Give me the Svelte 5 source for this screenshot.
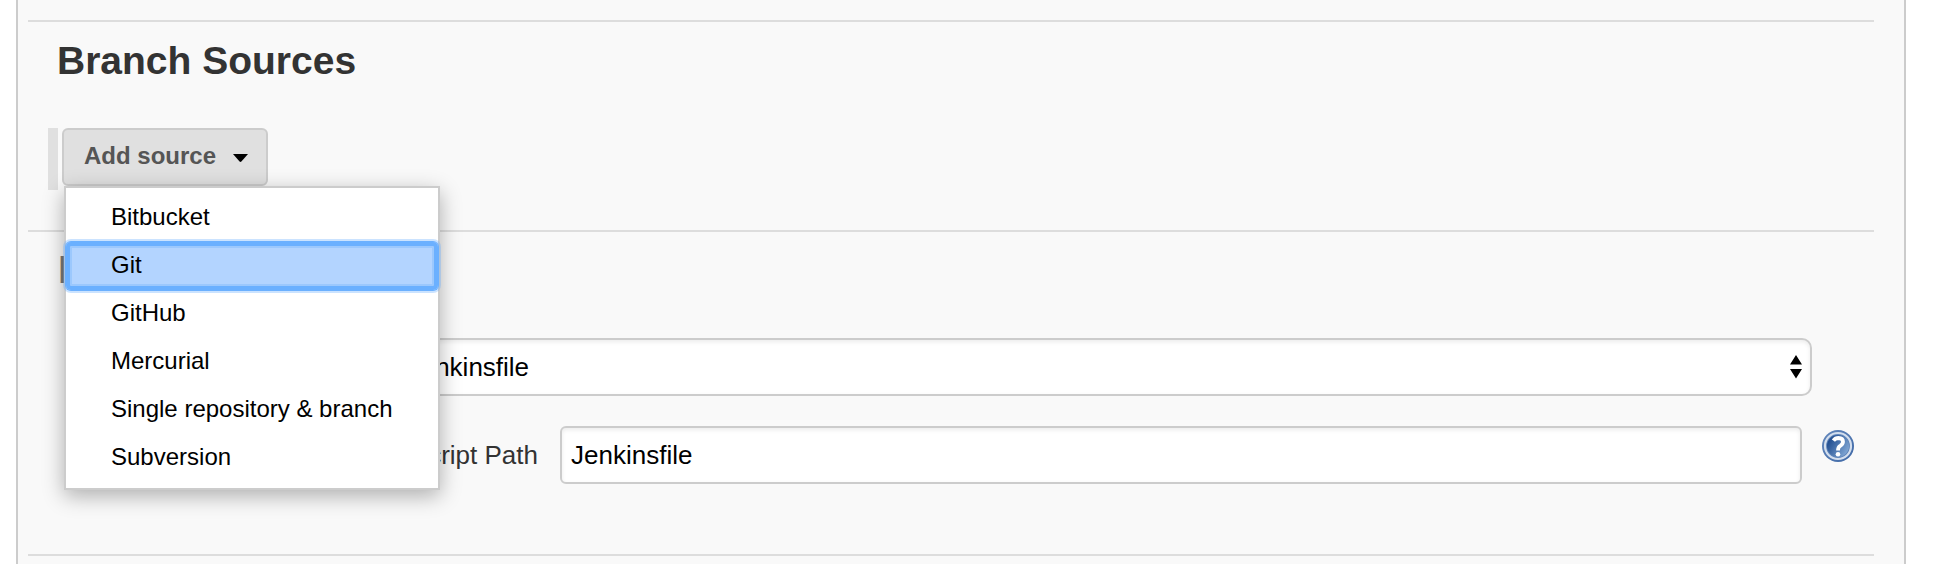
<script>
  const sources = ['Bitbucket', 'Git', 'GitHub', 'Mercurial', 'Single repository & branch', 'Subversion'];
  let active = $state('Git');
  let scriptPath = $state('Jenkinsfile');
</script>

<main class="panel">
  <section class="section branch">
    <h2>Branch Sources</h2>
    <div class="row">
      <span class="handle"></span>
      <div class="dropdown">
        <button class="add" type="button">
          Add source
          <svg class="caret" width="15" height="9" viewBox="0 0 15 9"><path d="M0 0h15L8.4 7.6q-.9.9-1.8 0z" /></svg>
        </button>
        <ul class="menu">
          {#each sources as source}
            <li class:active={source === active}>
              <button type="button" onmouseenter={() => (active = source)}>{source}</button>
            </li>
          {/each}
        </ul>
      </div>
    </div>
  </section>

  <section class="section build">
    <h2>Build Configuration</h2>
    <div class="mode">
      <div class="select">
        <span>by Jenkinsfile</span>
        <svg width="12" height="24" viewBox="0 0 12 24"><path d="M6 0l6 9.6H0zM0 14h12L6 23.6z" /></svg>
      </div>
    </div>
    <div class="path">
      <label class="label" for="script-path">Script Path</label>
      <input id="script-path" type="text" bind:value={scriptPath} />
      <svg class="help" width="32" height="32" viewBox="0 0 32 32">
        <defs>
          <linearGradient id="blue" x1="0" y1="0.2" x2="1" y2="0.8">
            <stop offset="0.1" stop-color="#234f91" />
            <stop offset="1" stop-color="#86acd8" />
          </linearGradient>
          <linearGradient id="edge" x1="0" y1="0" x2="1" y2="1">
            <stop offset="0" stop-color="#6488bc" />
            <stop offset="1" stop-color="#3e68a6" />
          </linearGradient>
        </defs>
        <circle cx="16" cy="16" r="16" fill="url(#edge)" />
        <circle cx="16" cy="16" r="13" fill="#5e84b9" stroke="#d3deed" stroke-width="2.2" />
        <circle cx="16" cy="16" r="11" fill="url(#blue)" />
        <path d="M11.4 10.6Q13.2 8 16.5 8Q21 8.2 21 11.8Q20.9 14.1 18.2 15.8Q16 17.1 16 20.4" fill="none" stroke="#fff" stroke-width="3.8" />
        <circle cx="16" cy="24.2" r="2.3" fill="#fff" />
      </svg>
    </div>
  </section>
  <div class="section rest"></div>
</main>

<style>
  :global(body) {
    margin: 0;
    background: #fff;
    overflow: hidden;
  }
  .panel {
    box-sizing: border-box;
    height: 564px;
    margin: 0 28px 0 16px;
    padding: 20px 30px 0 10px;
    border: solid #ccc;
    border-width: 0 2px;
    background: #f9f9f9;
    color: #333;
    font: 26px 'Liberation Sans', Arial, sans-serif;
    overflow: hidden;
  }
  .section {
    box-sizing: border-box;
    border-top: 2px solid #ddd;
  }
  .branch {
    height: 210px;
    padding: 17px 0 0 20px;
  }
  .build {
    height: 324px;
    padding: 16px 0 0 30px;
  }
  .rest {
    height: 10px;
  }
  h2 {
    margin: 0 0 0 9px;
    font-size: 39px;
    line-height: 44px;
    font-weight: bold;
  }
  .build h2 {
    margin: 0;
    color: #777;
  }
  .row {
    display: flex;
    gap: 4px;
    margin-top: 45px;
  }
  .handle {
    width: 10px;
    height: 62px;
    background: #e0e0e0;
  }
  .dropdown {
    position: relative;
  }
  .add {
    box-sizing: border-box;
    display: flex;
    align-items: center;
    justify-content: space-between;
    width: 206px;
    height: 58px;
    padding: 0 18px 3px 20px;
    border: 2px solid #ccc;
    border-radius: 6px;
    background: #e0e0e0;
    color: #555;
    font: bold 24px 'Liberation Sans', Arial, sans-serif;
  }
  .caret {
    margin-top: 5px;
    fill: #000;
  }
  .menu {
    position: absolute;
    z-index: 2;
    top: 58px;
    left: 2px;
    box-sizing: border-box;
    width: 376px;
    margin: 0;
    padding: 6px 0;
    border: 2px solid #ccc;
    background: #fff;
    list-style: none;
    box-shadow: 0 6px 20px rgba(0, 0, 0, 0.3);
  }
  .menu li {
    height: 48px;
  }
  .menu button {
    display: block;
    width: 100%;
    height: 46px;
    padding: 0 0 0 45px;
    border: 0;
    background: none;
    color: #000;
    font: 24px/46px 'Liberation Sans', Arial, sans-serif;
    text-align: left;
    white-space: nowrap;
  }
  .menu .active {
    border-radius: 5px;
    background: #b3d4ff;
    box-shadow:
      0 0 0 1px #6bb0ff,
      0 0 0 3px rgba(107, 176, 255, 0.35),
      inset 0 0 0 4px #6bb0ff,
      inset 0 0 0 6px #9cc8fd;
  }
  .mode,
  .path {
    display: flex;
    align-items: center;
    justify-content: flex-end;
  }
  .mode {
    margin: 46px 62px 0 0;
  }
  .select {
    box-sizing: border-box;
    display: flex;
    align-items: center;
    justify-content: space-between;
    width: 1475px;
    height: 58px;
    padding: 0 8px 0 34px;
    border: 2px solid #ccc;
    border-radius: 10px;
    background: #fff;
    color: #000;
    box-shadow: inset 0 2px 4px rgba(0, 0, 0, 0.08);
  }
  .path {
    margin: 30px 20px 0 0;
  }
  .path .label {
    margin-right: 22px;
  }
  input {
    box-sizing: border-box;
    width: 1242px;
    height: 58px;
    margin: 0;
    padding: 0 9px;
    border: 2px solid #ccc;
    border-radius: 6px;
    background: #fff;
    color: #000;
    font: inherit;
    box-shadow: inset 0 2px 4px rgba(0, 0, 0, 0.08);
  }
  .help {
    align-self: flex-start;
    margin: 4px 0 0 20px;
  }
</style>
